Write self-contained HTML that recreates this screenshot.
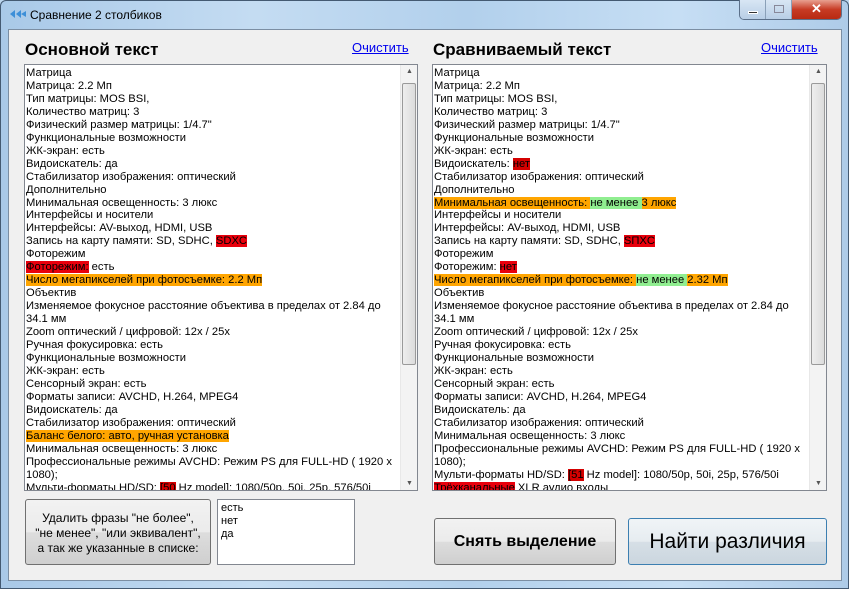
<!DOCTYPE html>
<html><head><meta charset="utf-8"><style>
*{margin:0;padding:0;box-sizing:border-box}
body{width:849px;height:589px;overflow:hidden;background:#bcd6ee;font-family:"Liberation Sans",sans-serif;position:relative}
.frame{position:absolute;left:0;top:0;width:849px;height:589px;background:linear-gradient(90deg,#a9c9e8 0%,#c4dcf2 30%,#b2d0ec 55%,#c6def4 80%,#aecbe8 100%);border:1px solid #445a72;border-radius:6px 6px 0 0}
.title{position:absolute;left:30px;top:8px;font-size:12px;color:#000}
.client{position:absolute;left:8px;top:29px;width:834px;height:552px;background:#f0f0f0;border:1px solid #7b8ea3}
.h{position:absolute;top:40px;font-size:17px;font-weight:bold;color:#000}
.lnk{position:absolute;top:40px;font-size:13px;color:#0000ee;text-decoration:underline}
.box{position:absolute;top:64px;width:394px;height:427px;background:#fff;border:1px solid #828790;overflow:hidden}
.txt{position:absolute;left:1px;top:2px;width:374px;font-size:11.2px;line-height:12.95px;color:#000;white-space:nowrap}
.sb{position:absolute;right:0;top:0;width:17px;height:100%;background:#f3f3f3;border-left:1px solid #e8e8e8}
.th{position:absolute;left:1px;top:18px;width:14px;height:282px;background:linear-gradient(90deg,#eee,#dcdcdc);border:1px solid #9a9a9a;border-radius:2px}
.ar{position:absolute;left:5px;font-size:7px;color:#555}
.r{background:#e8000c}.dr{background:#d40000}.o{background:#ffa500}.g{background:#90ee90}
.btn{position:absolute;border:1px solid #707070;border-radius:3px;background:linear-gradient(#f2f2f2 0%,#ebebeb 50%,#dddddd 51%,#cfcfcf 100%);text-align:center;color:#000}
</style></head><body>
<div class="frame"></div>
<svg style="position:absolute;left:9px;top:9px" width="18" height="10"><path d="M1 5 L6 1 L6 9Z M7 5 L12 1 L12 9Z M12 5 L17 2 L17 8Z" fill="#3d8fd8"/></svg>
<div class="title">Сравнение 2 столбиков</div>
<div style="position:absolute;left:739px;top:0;width:103px;height:20px;border:1px solid #5b708a;border-top:none;border-radius:0 0 5px 5px;overflow:hidden;display:flex">
<div style="width:26px;background:linear-gradient(#d8e6f4,#b8cee6);border-right:1px solid #8aa0b8;position:relative"><div style="position:absolute;left:8px;top:11px;width:10px;height:3px;background:#333;border:1px solid #fff"></div></div>
<div style="width:26px;background:linear-gradient(#d8e6f4,#b8cee6);border-right:1px solid #8aa0b8;position:relative"><div style="position:absolute;left:8px;top:5px;width:10px;height:8px;border:1px solid #889;"></div></div>
<div style="flex:1;background:linear-gradient(#e8a090,#c73b24 50%,#b82a12);color:#fff;font-weight:bold;font-size:13px;text-align:center;line-height:18px">✕</div>
</div>
<div class="client"></div>
<div class="h" style="left:25px">Основной текст</div>
<div class="lnk" style="left:352px">Очистить</div>
<div class="h" style="left:433px">Сравниваемый текст</div>
<div class="lnk" style="left:761px">Очистить</div>

<div class="box" style="left:24px"><div class="txt">Матрица<br>Матрица: 2.2 Мп<br>Тип матрицы: MOS BSI,<br>Количество матриц: 3<br>Физический размер матрицы: 1/4.7"<br>Функциональные возможности<br>ЖК-экран: есть<br>Видоискатель: да<br>Стабилизатор изображения: оптический<br>Дополнительно<br>Минимальная освещенность: 3 люкс<br>Интерфейсы и носители<br>Интерфейсы: AV-выход, HDMI, USB<br>Запись на карту памяти: SD, SDHC, <span class="r">SDXC</span><br>Фоторежим<br><span class="r">Фоторежим:</span> есть<br><span class="o">Число мегапикселей при фотосъемке: 2.2 Мп</span><br>Объектив<br>Изменяемое фокусное расстояние объектива в пределах от 2.84 до<br>34.1 мм<br>Zoom оптический / цифровой: 12x / 25x<br>Ручная фокусировка: есть<br>Функциональные возможности<br>ЖК-экран: есть<br>Сенсорный экран: есть<br>Форматы записи: AVCHD, H.264, MPEG4<br>Видоискатель: да<br>Стабилизатор изображения: оптический<br><span class="o">Баланс белого: авто, ручная установка</span><br>Минимальная освещенность: 3 люкс<br>Профессиональные режимы AVCHD: Режим PS для FULL-HD ( 1920 x<br>1080);<br>Мульти-форматы HD/SD: <span class="dr">[50</span> Hz model]: 1080/50p, 50i, 25p, 576/50i</div>
<div class="sb"><div class="ar" style="top:3px">▲</div><div class="th"></div><div class="ar" style="bottom:3px">▼</div></div></div>

<div class="box" style="left:432px;width:395px"><div class="txt">Матрица<br>Матрица: 2.2 Мп<br>Тип матрицы: MOS BSI,<br>Количество матриц: 3<br>Физический размер матрицы: 1/4.7"<br>Функциональные возможности<br>ЖК-экран: есть<br>Видоискатель: <span class="dr">нет</span><br>Стабилизатор изображения: оптический<br>Дополнительно<br><span class="o">Минимальная освещенность: </span><span class="g">не менее </span><span class="o">3 люкс</span><br>Интерфейсы и носители<br>Интерфейсы: AV-выход, HDMI, USB<br>Запись на карту памяти: SD, SDHC, <span class="r">SПXC</span><br>Фоторежим<br>Фоторежим: <span class="r">нет</span><br><span class="o">Число мегапикселей при фотосъемке: </span><span class="g">не менее </span><span class="o">2.32 Мп</span><br>Объектив<br>Изменяемое фокусное расстояние объектива в пределах от 2.84 до<br>34.1 мм<br>Zoom оптический / цифровой: 12x / 25x<br>Ручная фокусировка: есть<br>Функциональные возможности<br>ЖК-экран: есть<br>Сенсорный экран: есть<br>Форматы записи: AVCHD, H.264, MPEG4<br>Видоискатель: да<br>Стабилизатор изображения: оптический<br>Минимальная освещенность: 3 люкс<br>Профессиональные режимы AVCHD: Режим PS для FULL-HD ( 1920 x<br>1080);<br>Мульти-форматы HD/SD: <span class="dr">[51</span> Hz model]: 1080/50p, 50i, 25p, 576/50i<br><span class="r">Трёхканальные</span> XLR аудио входы</div>
<div class="sb"><div class="ar" style="top:3px">▲</div><div class="th"></div><div class="ar" style="bottom:3px">▼</div></div></div>

<div class="btn" style="left:25px;top:499px;width:186px;height:66px;font-size:12px;line-height:15px;padding-top:11px">Удалить фразы "не более",<br>"не менее", "или эквивалент",<br>а так же указанные в списке:</div>
<div style="position:absolute;left:217px;top:499px;width:138px;height:66px;background:#fff;border:1px solid #828790;font-size:11px;line-height:13px;padding:2px 0 0 3px">есть<br>нет<br>да</div>
<div class="btn" style="left:434px;top:518px;width:182px;height:47px;font-size:16px;font-weight:bold;line-height:45px">Снять выделение</div>
<div class="btn" style="left:628px;top:518px;width:199px;height:47px;font-size:21px;line-height:45px;border-color:#3c7fb1;background:linear-gradient(#f0f4f7 0%,#e6ecf0 50%,#d6dfe6 51%,#cbd6df 100%)">Найти различия</div>
</body></html>
